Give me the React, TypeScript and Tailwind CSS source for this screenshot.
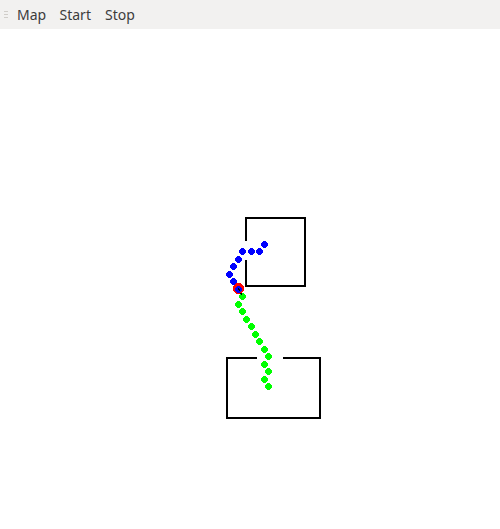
const trail: [number, number][] = [
  [264, 244], [259, 251], [251, 251], [242, 251], [238, 259],
  [233, 266], [229, 274], [233, 281],
];

const path: [number, number][] = [
  [242, 296], [238, 304], [242, 311], [246, 319], [251, 326], [255, 334],
  [259, 341], [264, 349], [268, 356], [264, 364], [268, 371], [264, 379], [268, 386],
];

function Dot({ x, y, color }: { x: number; y: number; color: string }) {
  return (
    <path
      transform={`translate(${x - 3} ${y - 3})`}
      fill={color}
      d="M2 0h3v1h1v1h1v3h-1v1h-1v1h-3v-1h-1v-1h-1v-3h1v-1h1z"
    />
  );
}

export default function App() {
  return (
    <div className="flex h-[529px] w-[500px] flex-col overflow-hidden bg-white">
      <nav className="flex h-[29px] shrink-0 items-center bg-[#f2f1f0] pl-1 font-['Noto_Sans',sans-serif] text-[14px] leading-5 text-[#3c3c3c]">
        <div className="mr-[9px] flex w-1 flex-col gap-[2px]">
          <span className="h-px bg-[#d0cdc9]" />
          <span className="h-px bg-[#d0cdc9]" />
          <span className="h-px bg-[#d0cdc9]" />
        </div>
        <button className="mr-[13px] w-[29px] whitespace-nowrap text-left">Map</button>
        <button className="mr-[13px] w-[33px] whitespace-nowrap pl-[0.5px] text-left">Start</button>
        <button className="w-[31px] whitespace-nowrap text-left">Stop</button>
      </nav>
      <svg className="block h-[500px] w-[500px]" viewBox="0 29 500 500" shapeRendering="crispEdges">
        <g fill="none" stroke="#000" strokeWidth="2">
          <path d="M246 241V218H305V286H246V260" />
          <path d="M257 358H227V418H320V358H283" />
        </g>
        {trail.map(([x, y], i) => (
          <Dot key={i} x={x} y={y} color="#0000ff" />
        ))}
        {path.map(([x, y], i) => (
          <Dot key={i} x={x} y={y} color="#00ff00" />
        ))}
        <path
          fill="#ff0000"
          d="M236 283h5v1h1v1h1v1h1v5h-1v1h-1v1h-1v1h-5v-1h-1v-1h-1v-1h-1v-5h1v-1h1v-1h1z"
        />
        <Dot x={238} y={289} color="#0000ff" />
        <path d="M238.5 288.5L242.5 296.5" stroke="#000" strokeWidth="1" strokeDasharray="3 1.5" />
      </svg>
    </div>
  );
}
